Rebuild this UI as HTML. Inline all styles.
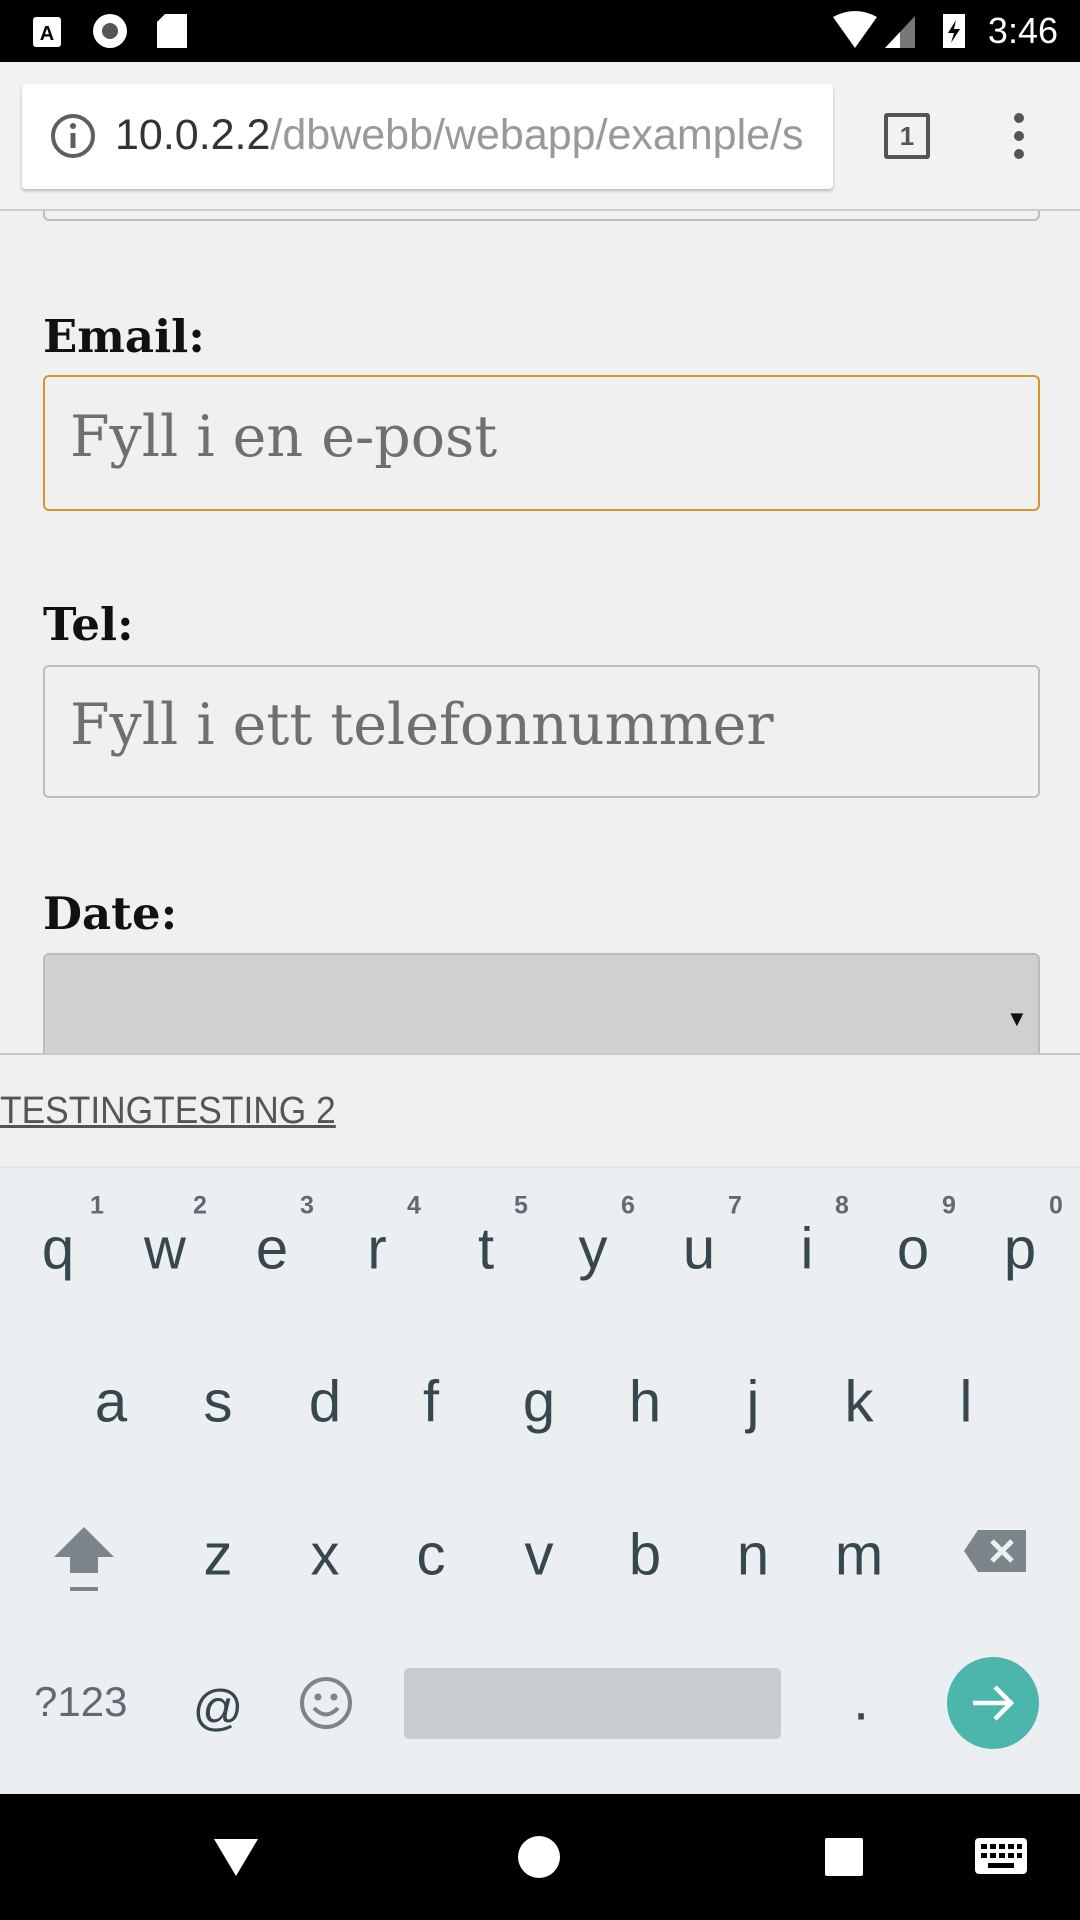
<!DOCTYPE html>
<html><head><meta charset="utf-8"><style>
*{margin:0;padding:0;box-sizing:border-box}
body{width:1080px;height:1920px;overflow:hidden;background:#f0f0f0;position:relative;font-family:"Liberation Sans",sans-serif}
.a{position:absolute}
.lbl{position:absolute;left:43px;font-family:"DejaVu Serif",serif;font-weight:bold;font-size:45px;color:#111}
.inp{position:absolute;left:43px;width:997px;border:2px solid #bdbdbd;border-radius:6px;background:#f0f0f0}
.ph{position:absolute;left:70px;font-family:"DejaVu Serif",serif;font-size:57px;color:#6f6f6f;white-space:nowrap}
.k{position:absolute;width:100px;text-align:center;font-size:58px;color:#37474f;transform:translate(-50px,-50%)}
.n{position:absolute;width:40px;text-align:center;font-size:25px;font-weight:bold;color:#5f6b72;transform:translate(-20px,-50%)}
</style></head><body>
<div class="a" style="left:43px;top:200px;width:997px;height:21px;border:2px solid #bdbdbd;border-top:none;border-radius:0 0 6px 6px"></div>
<div class="a" style="left:0;top:0;width:1080px;height:62px;background:#000"></div>
<svg class="a" style="left:0;top:0" width="1080" height="62">
<rect x="33" y="17" width="28" height="30" rx="3" fill="#fff"/><text x="47" y="40" font-size="20" font-weight="bold" text-anchor="middle" font-family="Liberation Sans">A</text>
<circle cx="110" cy="31" r="17" fill="#fff"/><circle cx="110" cy="31" r="8" fill="#555"/>
<path d="M165 14h22v34h-30v-26z" fill="#fff"/>
<path d="M833 17 Q855 5 877 17 L855 48Z" fill="#fff"/>
<path d="M915 16 L915 48 L885 48Z" fill="#777"/><path d="M900 32 L900 48 L885 48Z" fill="#fff"/>
<rect x="943" y="14" width="22" height="34" fill="#fff"/><path d="M956 20 L948 33 L954 33 L951 43 L960 29 L954 29Z" fill="#000"/>
<text x="1058" y="43" font-size="36" fill="#fff" text-anchor="end" font-family="Liberation Sans">3:46</text>
</svg>
<div class="a" style="left:0;top:62px;width:1080px;height:149px;background:#f2f2f2;border-bottom:2px solid #ccc"></div>
<div class="a" style="left:22px;top:84px;width:811px;height:105px;background:#fff;border-radius:4px;box-shadow:0 2px 3px rgba(0,0,0,.25)"></div>
<svg class="a" style="left:48px;top:111px" width="50" height="50"><circle cx="25" cy="25" r="20" fill="none" stroke="#5f5f5f" stroke-width="4"/><rect x="22.5" y="22" width="5" height="15" fill="#5f5f5f"/><circle cx="25" cy="15" r="3" fill="#5f5f5f"/></svg>
<div class="a" style="left:115px;top:111px;font-size:43px;color:#333;white-space:nowrap;width:697px;overflow:hidden">10.0.2.2<span style="color:#999">/dbwebb/webapp/example/s</span></div>
<div class="a" style="left:884px;top:113px;width:46px;height:46px;border:4px solid #555;border-radius:3px;font-size:26px;font-weight:bold;color:#555;text-align:center;line-height:38px">1</div>
<svg class="a" style="left:1008px;top:112px" width="22" height="50"><circle cx="11" cy="6" r="5" fill="#555"/><circle cx="11" cy="24" r="5" fill="#555"/><circle cx="11" cy="42" r="5" fill="#555"/></svg>
<div class="lbl" style="top:310px">Email:</div>
<div class="inp" style="top:375px;height:136px;border-color:#d4972c"></div>
<div class="ph" style="top:404px">Fyll i en e-post</div>
<div class="lbl" style="top:598px">Tel:</div>
<div class="inp" style="top:665px;height:133px"></div>
<div class="ph" style="top:692px">Fyll i ett telefonnummer</div>
<div class="lbl" style="top:887px">Date:</div>
<div class="a" style="left:43px;top:953px;width:997px;height:110px;background:#d0d0d0;border:2px solid #bbb;border-radius:6px"></div>
<div class="a" style="left:1006px;top:1006px;font-size:22px;color:#111">▼</div>
<div class="a" style="left:0;top:1053px;width:1080px;height:113px;background:#f0f0f0;border-top:2px solid #c8c8c8"></div>
<div class="a" style="left:0;top:1090px;font-size:38px;color:#555;text-decoration:underline;white-space:nowrap;transform:scaleX(0.93);transform-origin:0 0">TESTINGTESTING 2</div>
<div class="a" style="left:0;top:1166px;width:1080px;height:628px;background:#eceff1;border-top:2px solid #e4e6e8"></div>
<div class="n" style="left:97px;top:1206px">1</div><div class="n" style="left:200px;top:1206px">2</div><div class="n" style="left:307px;top:1206px">3</div><div class="n" style="left:414px;top:1206px">4</div><div class="n" style="left:521px;top:1206px">5</div><div class="n" style="left:628px;top:1206px">6</div><div class="n" style="left:735px;top:1206px">7</div><div class="n" style="left:842px;top:1206px">8</div><div class="n" style="left:949px;top:1206px">9</div><div class="n" style="left:1056px;top:1206px">0</div>
<div class="k" style="left:58px;top:1249px">q</div><div class="k" style="left:165px;top:1249px">w</div><div class="k" style="left:272px;top:1249px">e</div><div class="k" style="left:377px;top:1249px">r</div><div class="k" style="left:486px;top:1249px">t</div><div class="k" style="left:593px;top:1249px">y</div><div class="k" style="left:699px;top:1249px">u</div><div class="k" style="left:807px;top:1249px">i</div><div class="k" style="left:913px;top:1249px">o</div><div class="k" style="left:1020px;top:1249px">p</div>
<div class="k" style="left:111px;top:1402px">a</div><div class="k" style="left:218px;top:1402px">s</div><div class="k" style="left:325px;top:1402px">d</div><div class="k" style="left:431px;top:1402px">f</div><div class="k" style="left:539px;top:1402px">g</div><div class="k" style="left:645px;top:1402px">h</div><div class="k" style="left:753px;top:1402px">j</div><div class="k" style="left:859px;top:1402px">k</div><div class="k" style="left:966px;top:1402px">l</div>
<div class="k" style="left:218px;top:1555px">z</div><div class="k" style="left:325px;top:1555px">x</div><div class="k" style="left:431px;top:1555px">c</div><div class="k" style="left:539px;top:1555px">v</div><div class="k" style="left:645px;top:1555px">b</div><div class="k" style="left:753px;top:1555px">n</div><div class="k" style="left:859px;top:1555px">m</div>
<svg class="a" style="left:52px;top:1525px" width="64" height="70"><path d="M32 2 L62 32 L46 32 L46 48 L18 48 L18 32 L2 32Z" fill="#7b868c"/><rect x="18" y="62" width="28" height="4" fill="#7b868c"/></svg>
<svg class="a" style="left:962px;top:1528px" width="66" height="46"><path d="M16 2 H64 V44 H16 L2 23Z" fill="#7b868c"/><path d="M30 13 L50 33 M50 13 L30 33" stroke="#eceff1" stroke-width="5"/></svg>
<div class="a" style="left:34px;top:1678px;font-size:42px;color:#5f6b72">?123</div>
<div class="k" style="left:218px;top:1708px;font-size:50px">@</div>
<svg class="a" style="left:298px;top:1675px" width="56" height="56"><circle cx="28" cy="28" r="24" fill="none" stroke="#7b868c" stroke-width="4"/><circle cx="20" cy="22" r="3.5" fill="#7b868c"/><circle cx="36" cy="22" r="3.5" fill="#7b868c"/><path d="M16 33 Q28 46 40 33" fill="none" stroke="#7b868c" stroke-width="4"/></svg>
<div class="a" style="left:404px;top:1668px;width:377px;height:71px;background:#c8cdd0;border-radius:5px"></div>
<div class="k" style="left:861px;top:1700px">.</div>
<div class="a" style="left:947px;top:1657px;width:92px;height:92px;border-radius:50%;background:#4db6ac"></div>
<svg class="a" style="left:967px;top:1677px" width="52" height="52"><path d="M6 26 H44 M28 10 L44 26 L28 42" fill="none" stroke="#fff" stroke-width="4.5"/></svg>
<div class="a" style="left:0;top:1794px;width:1080px;height:126px;background:#000"></div>
<svg class="a" style="left:0;top:1794px" width="1080" height="126">
<path d="M214 45 H258 L236 82Z" fill="#fff"/>
<circle cx="539" cy="63" r="21" fill="#fff"/>
<rect x="825" y="44" width="38" height="38" rx="2" fill="#fff"/>
<rect x="975" y="44" width="52" height="36" rx="4" fill="#fff"/>
<g fill="#000"><rect x="981" y="50" width="6" height="5"/><rect x="990" y="50" width="6" height="5"/><rect x="999" y="50" width="6" height="5"/><rect x="1008" y="50" width="6" height="5"/><rect x="1017" y="50" width="5" height="5"/><rect x="981" y="59" width="6" height="5"/><rect x="990" y="59" width="6" height="5"/><rect x="999" y="59" width="6" height="5"/><rect x="1008" y="59" width="6" height="5"/><rect x="1017" y="59" width="5" height="5"/><rect x="988" y="69" width="26" height="5"/></g>
</svg>
</body></html>
